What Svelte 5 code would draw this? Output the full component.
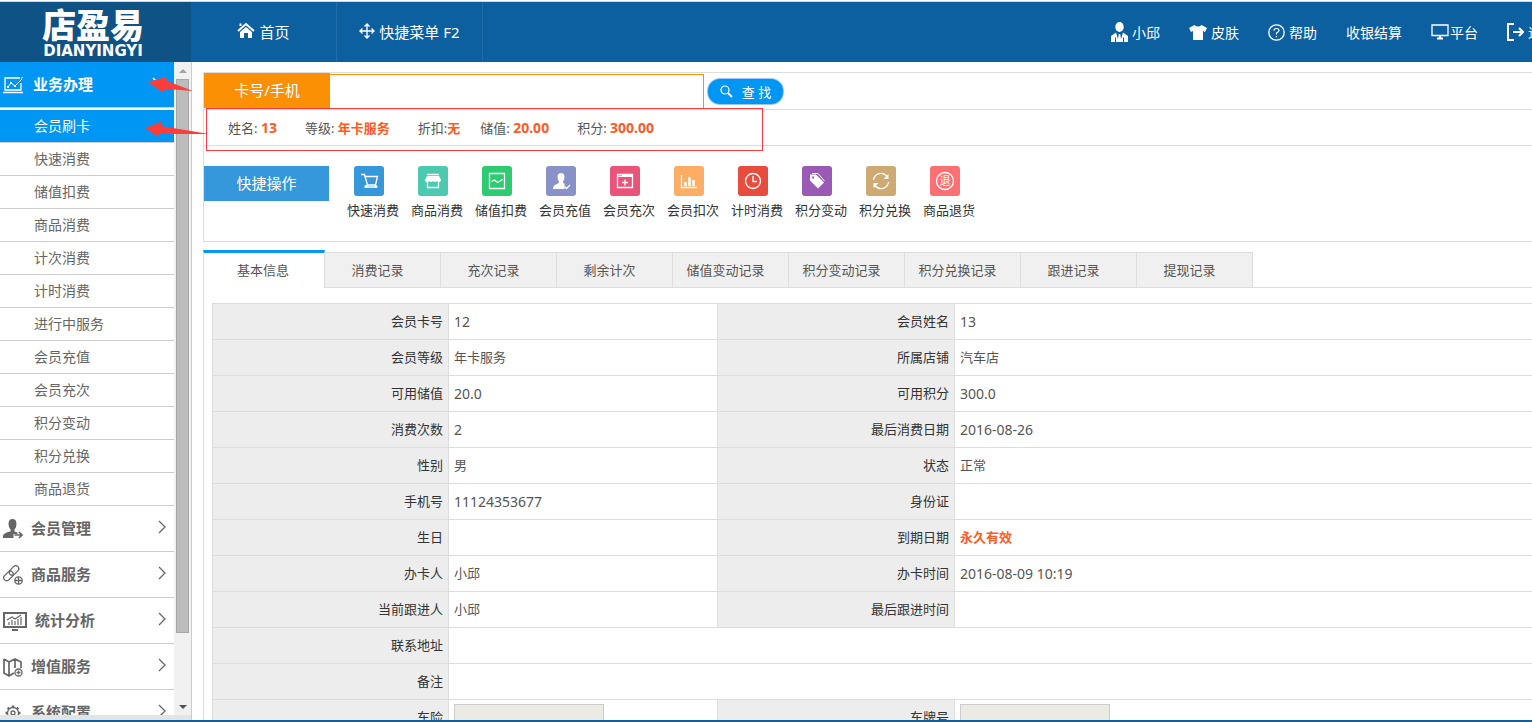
<script>
    const subItems = [
        "会员刷卡", "快速消费", "储值扣费", "商品消费", "计次消费", "计时消费",
        "进行中服务", "会员充值", "会员充次", "积分变动", "积分兑换", "商品退货"
    ];
    const groups = [
        { icon: "member", label: "会员管理" },
        { icon: "link", label: "商品服务" },
        { icon: "chart", label: "统计分析" },
        { icon: "map", label: "增值服务" },
        { icon: "gear", label: "系统配置" }
    ];
    const info = [
        { label: "姓名: ", value: "13", num: true },
        { label: "等级: ", value: "年卡服务" },
        { label: "折扣:", value: "无", tight: true },
        { label: "储值: ", value: "20.00", num: true },
        { label: "积分: ", value: "300.00", num: true }
    ];
    const actions = [
        { icon: "cart", label: "快速消费" },
        { icon: "shop", label: "商品消费" },
        { icon: "wave", label: "储值扣费" },
        { icon: "user", label: "会员充值" },
        { icon: "window", label: "会员充次" },
        { icon: "bars", label: "会员扣次" },
        { icon: "clock", label: "计时消费" },
        { icon: "tags", label: "积分变动" },
        { icon: "cycle", label: "积分兑换" },
        { icon: "refund", label: "商品退货" }
    ];
    const tabs = [
        "基本信息", "消费记录", "充次记录", "剩余计次", "储值变动记录",
        "积分变动记录", "积分兑换记录", "跟进记录", "提现记录"
    ];
    const rows = [
        ["会员卡号", "12", "会员姓名", "13"],
        ["会员等级", "年卡服务", "所属店铺", "汽车店"],
        ["可用储值", "20.0", "可用积分", "300.0"],
        ["消费次数", "2", "最后消费日期", "2016-08-26"],
        ["性别", "男", "状态", "正常"],
        ["手机号", "11124353677", "身份证", ""],
        ["生日", "", "到期日期", "永久有效"],
        ["办卡人", "小邱", "办卡时间", "2016-08-09 10:19"],
        ["当前跟进人", "小邱", "最后跟进时间", ""]
    ];

    let activeSub = $state("会员刷卡");
    let activeTab = $state("基本信息");
    let keyword = $state("");

    const isNum = (text) => /^[\d.:\- ]+$/.test(text);
</script>

<div class="page">
    <header class="topbar">
        <a class="logo" href="#home">
            <strong>店盈易</strong>
            <span>DIANYINGYI</span>
        </a>
        <nav class="main-nav">
            <a href="#home">
                <svg width="18" height="18" viewBox="0 0 18 18" fill="none" stroke="#fff" stroke-width="2">
                    <path d="M1 9 9 2l8 7M3.500 4V1.500" />
                    <path d="M3 10 9 5l6 5v6h-4v-5H7v5H3z" fill="#fff" stroke="none" />
                </svg>
                首页
            </a>
            <a href="#menu">
                <svg width="16" height="16" viewBox="0 0 16 16" fill="none" stroke="#fff" stroke-width="1.400">
                    <path d="M8 1v14M1 8h14M5.500 3.500 8 1l2.500 2.500M5.500 12.500 8 15l2.500-2.500M3.500 5.500 1 8l2.500 2.500M12.500 5.500 15 8l-2.500 2.500" />
                </svg>
                快捷菜单 F2
            </a>
        </nav>
        <nav class="user-nav">
            <a href="#user">
                <svg width="17" height="20" viewBox="0 0 17 20" fill="#fff">
                    <ellipse cx="8.500" cy="5" rx="4.200" ry="5" />
                    <path d="M0 20v-6l5-3.500L7 17l.800-5h1.400l.800 5 2-6.500 5 3.500v6z" />
                    <path d="M4.500 15.500V20M12.500 15.500V20" stroke="#0c60a0" />
                </svg>
                小邱
            </a>
            <a href="#skin">
                <svg width="18" height="16" viewBox="0 0 18 16" fill="#fff">
                    <path d="M5.500 1q3.500 3 7 0L18 4l-2 4-2-1v9H4V7L2 8 0 4z" />
                </svg>
                皮肤
            </a>
            <a href="#help">
                <svg width="17" height="17" viewBox="0 0 17 17" fill="none" stroke="#fff">
                    <circle cx="8.500" cy="8.500" r="7.700" stroke-width="1.300" />
                    <path d="M6 6.500Q6 4.500 8.500 4.500T11 6.500Q11 7.800 8.500 9v1.500M8.500 12v1.200" stroke-width="1.200" />
                </svg>
                帮助
            </a>
            <a href="#cashier">收银结算</a>
            <a href="#platform" class="snug">
                <svg width="18" height="16" viewBox="0 0 18 16" fill="none" stroke="#fff">
                    <path d="M1 1h16v10.500H1z" stroke-width="1.300" />
                    <path d="M9 12v2M6 14.500h6" stroke-width="2" />
                </svg>
                平台
            </a>
            <a href="#logout">
                <svg width="17" height="18" viewBox="0 0 17 18" fill="none" stroke="#fff" stroke-width="2">
                    <path d="M7 1H1v16h6M6 9h10M12 5l4 4-4 4" />
                </svg>
                退出
            </a>
        </nav>
    </header>

    <div class="body">
        <aside class="sidebar">
            <nav class="menu">
                <a class="group open" href="#business">
                    <svg width="22" height="18" viewBox="0 0 22 18" fill="none" stroke="#fff">
                        <path d="M17 2H2v12h16V7M0 16.500h20" stroke-width="1.300" />
                        <path d="m5 11 3-4 4 3 7-7M18 2.500l2-1.500" />
                        <path d="M4 10h2v2H4zM7 6h2v2H7zM11 9h2v2h-2z" fill="#fff" stroke="none" />
                    </svg>
                    <span>业务办理</span>
                    <svg class="chevron" width="14" height="14" viewBox="0 0 14 14" fill="none" stroke="#fff" stroke-width="1.500">
                        <path d="m1 2 6 6 6-6" />
                    </svg>
                </a>
                <ul>
                    {#each subItems as item}
                        <li>
                            <a href="#sub" class:active={item === activeSub} onclick={() => (activeSub = item)}>{item}</a>
                        </li>
                    {/each}
                </ul>
                {#each groups as group}
                    <a class="group" href="#group">
                        <svg width={group.icon === "chart" ? 24 : 20} height="20" viewBox={group.icon === "chart" ? "0 0 24 20" : "0 0 20 20"} fill="none" stroke="#666" stroke-width="1.300">
                            {#if group.icon === "member"}
                                <path d="M5.500 5q0-5 4-5t4 5q0 3.500-2 5.500v2l3 1v1.500h-4V19H0v-2q0-3 7.500-4.500v-2q-2-2-2-5.500z" fill="#666" stroke="none" />
                                <path d="M11.500 16H19M16 13l3 3-3 3" stroke-width="1.600" />
                            {:else if group.icon === "link"}
                                <rect x="5.500" y="2.500" width="11" height="6" rx="3" transform="rotate(-45 11 5.500)" />
                                <rect x="0" y="8" width="11" height="6" rx="3" transform="rotate(-45 5.500 11)" />
                                <circle cx="15.500" cy="15.500" r="3.700" fill="#fff" />
                                <path d="M15.500 12v7M12 15.500h7" />
                            {:else if group.icon === "chart"}
                                <path d="M1 2h22v14H1zM9 19h6" stroke-width="2" />
                                <path d="M6 14v-3M9 14V9M12 14v-4M15 14V8M18 14V6M4 9l5-3 3 2 6-4" stroke-width="1.200" />
                            {:else if group.icon === "map"}
                                <path d="m1 2 5 3 6-3 6 3v6M1 2v14l5 3 5-3M6 5v14M12 2v9" stroke-width="1.700" />
                                <circle cx="15.500" cy="15.500" r="3.500" fill="#fff" />
                                <path d="M15.500 13.500v4M13.500 15.500h4" />
                            {:else}
                                <circle cx="10" cy="10" r="5.500" />
                                <circle cx="10" cy="10" r="2" />
                                <path d="M10 2.500v2M10 15.500v2M2.500 10h2M15.500 10h2M4.700 4.700l1.400 1.400M13.900 13.900l1.400 1.400M4.700 15.300l1.400-1.400M13.900 6.100l1.400-1.400" stroke-width="2.500" />
                            {/if}
                        </svg>
                        <span>{group.label}</span>
                        <svg class="chevron" width="8" height="14" viewBox="0 0 8 14" fill="none" stroke="#666" stroke-width="1.300">
                            <path d="m1 1 6 6-6 6" />
                        </svg>
                    </a>
                {/each}
            </nav>
            <div class="scrollbar">
                <i class="up"></i>
                <div class="thumb"></div>
                <i class="down"></i>
            </div>
            <div class="menu-foot"></div>
        </aside>

        <main>
            <section class="card-panel">
                <form class="search" onsubmit={(e) => e.preventDefault()}>
                    <label for="keyword">卡号/手机</label>
                    <input id="keyword" type="text" bind:value={keyword} />
                    <button type="submit">
                        <svg width="13" height="13" viewBox="0 0 13 13" fill="none" stroke="#fff">
                            <circle cx="5" cy="5" r="4" stroke-width="1.200" />
                            <path d="m8 8 4 4" stroke-width="2" />
                        </svg>
                        <span>查 找</span>
                    </button>
                </form>
                <div class="info">
                    {#each info as item}
                        <span class:tight={item.tight}>{item.label}<b class:num={item.num}>{item.value}</b></span>
                    {/each}
                    <div class="mark"></div>
                </div>
                <div class="quick">
                    <h2>快捷操作</h2>
                    <div class="actions">
                        {#each actions as action}
                            <a href="#action">
                                <svg class={action.icon} width="30" height="30" viewBox="0 0 30 30" fill="none" stroke="#fff" stroke-width="1.300">
                                    {#if action.icon === "cart"}
                                        <path d="M7 8.500h3.500l3 10.500h8L23.500 10.500H11.500M13.500 18.500l-2 2.500H23" />
                                        <circle cx="12" cy="20.500" r="1.500" fill="#fff" stroke="none" />
                                        <circle cx="22" cy="20.500" r="1.500" fill="#fff" stroke="none" />
                                    {:else if action.icon === "shop"}
                                        <path d="M9 8.500h12" />
                                        <path d="M9 10h12l2 4q0 2-2 2t-2-1q-1 1-2 1t-2-1q-1 1-2 1t-2-1q0 1-2 1t-2-2z" fill="#fff" stroke="none" />
                                        <path d="M9.500 16v5.500h11V16" />
                                    {:else if action.icon === "wave"}
                                        <path d="M7.500 7.500h15v15h-15zM9.500 15.500l3-1.500 3 2.500 5-3" />
                                    {:else if action.icon === "user"}
                                        <path d="M15 7q3.500 0 3.500 4 0 3-1.500 4.500 0 2 2 2.500l2 2v3H7q0-4 4-5 2-.5 2-2.500-1.500-1.500-1.500-4.500 0-4 3.500-4z" fill="#fff" stroke="none" />
                                        <circle cx="21" cy="20.500" r="3" fill="#8892c8" stroke="none" />
                                        <path d="m18 20 2.500 2.500L24 19" />
                                    {:else if action.icon === "window"}
                                        <path d="M7.500 8.500h15v13h-15zM15 13.500v6M12 16.500h6" />
                                        <path d="M7 8h16v3H7z" fill="#fff" stroke="none" />
                                        <path d="M8.500 9.500h4" stroke="#ea5479" stroke-dasharray="1 1" />
                                    {:else if action.icon === "bars"}
                                        <path d="M7.500 9v12.500H23" />
                                        <path d="M11.500 20v-4M15.500 20v-9M19.500 20v-6" stroke-width="2.500" />
                                    {:else if action.icon === "clock"}
                                        <circle cx="15" cy="15" r="7.500" />
                                        <path d="M15 10v5.500h4" />
                                    {:else if action.icon === "tags"}
                                        <path fill-rule="evenodd" d="M8 8.500h6l8 8-6 6-8-8zM10 10.500v2h2v-2z" fill="#fff" stroke="none" />
                                        <path d="M10 7.500h6l6.500 7.500" stroke-width="1" />
                                    {:else if action.icon === "cycle"}
                                        <path d="M7.500 14a7.500 7.500 0 0 1 13.500-3.500M22.500 16A7.500 7.500 0 0 1 9 19.500" />
                                        <path d="M22.500 8v5H17.500zM7.500 22v-5H12.500z" fill="#fff" stroke="none" />
                                    {:else}
                                        <circle cx="15" cy="15" r="8.500" />
                                        <text x="15" y="19" text-anchor="middle" font-size="11" fill="#fff" stroke="none">退</text>
                                    {/if}
                                </svg>
                                {action.label}
                            </a>
                        {/each}
                    </div>
                </div>
            </section>

            <section class="detail">
                <div class="tabs" role="tablist">
                    {#each tabs as tab}
                        <button type="button" role="tab" aria-selected={tab === activeTab} class:active={tab === activeTab} onclick={() => (activeTab = tab)}>{tab}</button>
                    {/each}
                </div>
                <table>
                    <colgroup>
                        <col class="c1" />
                        <col class="c2" />
                        <col class="c3" />
                        <col />
                    </colgroup>
                    <tbody>
                        {#each rows as row}
                            <tr>
                                <th scope="row">{row[0]}</th>
                                <td class:num={isNum(row[1])}>{row[1]}</td>
                                <th scope="row">{row[2]}</th>
                                <td class:num={isNum(row[3])} class:hot={row[3] === "永久有效"}>{row[3]}</td>
                            </tr>
                        {/each}
                        <tr>
                            <th scope="row">联系地址</th>
                            <td colspan="3"></td>
                        </tr>
                        <tr>
                            <th scope="row">备注</th>
                            <td colspan="3"></td>
                        </tr>
                        <tr>
                            <th scope="row"><label for="insurance">车险</label></th>
                            <td><input id="insurance" type="text" disabled /></td>
                            <th scope="row"><label for="plate">车牌号</label></th>
                            <td><input id="plate" type="text" disabled /></td>
                        </tr>
                    </tbody>
                </table>
            </section>
        </main>
    </div>

    <!-- pointers over the open menu group and its active entry -->
    <svg class="pointers" width="70" height="70" viewBox="0 0 70 70" fill="#fc3d39">
        <path d="M4 11 22 6l1 4 26 10-27-2-4 3z" />
        <path d="m1 57 16-6v4l48 8-50 0-1 3z" />
    </svg>
</div>

<style>
    :global(body) {
        margin: 0;
        overflow: hidden;
    }
    .page {
        position: relative;
        display: flex;
        flex-direction: column;
        box-sizing: border-box;
        height: 100vh;
        overflow: hidden;
        border-top: 1px solid #fff;
        border-bottom: 2px solid #0c60a0;
        background: #fff;
        color: #555;
        font-family: "Noto Sans", "Noto Sans CJK SC", sans-serif;
        font-size: 13px;
    }
    a {
        color: inherit;
        text-decoration: none;
    }

    .topbar {
        flex: none;
        display: flex;
        height: 60px;
        border-top: 1px solid #d5d5d5;
        background: #0c60a0;
        color: #fff;
        white-space: nowrap;
        overflow: hidden;
    }
    .logo {
        width: 191px;
        box-sizing: border-box;
        padding: 5px 5px 0 0;
        background: #0f5285;
        display: flex;
        flex-direction: column;
        align-items: center;
    }
    .logo strong {
        font-size: 34px;
        line-height: 36px;
        font-weight: 900;
    }
    .logo span {
        font-family: "DejaVu Sans", sans-serif;
        font-size: 15px;
        line-height: 16px;
        font-weight: 700;
    }
    .main-nav {
        display: flex;
        padding-bottom: 0;
        font-size: 15px;
    }
    .main-nav a {
        width: 145px;
        padding-bottom: 2px;
        border-right: 1px solid #1f6ea9;
        display: flex;
        align-items: center;
        justify-content: center;
        gap: 4px;
    }
    .user-nav {
        display: flex;
        align-items: center;
        gap: 29px;
        margin-left: auto;
        margin-right: -24px;
        font-size: 14px;
    }
    .user-nav a {
        display: flex;
        align-items: center;
        gap: 4px;
    }
    .user-nav a.snug {
        gap: 1px;
    }

    .body {
        flex: 1;
        min-height: 0;
        display: flex;
    }
    .sidebar {
        flex: none;
        display: grid;
        grid-template-columns: 174px 17px;
        grid-template-rows: minmax(0, 1fr) 5px;
        border-right: 1px solid #ccc;
    }
    .menu {
        overflow: hidden;
    }
    .menu-foot {
        grid-column: span 2;
        background: #e4e4e4;
    }
    .group {
        display: flex;
        align-items: center;
        gap: 8px;
        box-sizing: border-box;
        height: 46px;
        padding: 0 8px 0 3px;
        border-bottom: 1px solid #ccc;
        color: #666;
        font-size: 15px;
        font-weight: 700;
    }
    .group.open {
        background: #0096f3;
        color: #fff;
    }
    .group span,
    .chevron {
        padding-bottom: 3px;
    }
    .chevron {
        margin-left: auto;
    }
    .menu ul {
        list-style: none;
        margin: 0;
        padding: 2px 0 0;
    }
    .menu li a {
        display: block;
        padding-left: 34px;
        border-bottom: 1px solid #ccc;
        color: #666;
        font-size: 14px;
        line-height: 32px;
    }
    .menu li a.active {
        background: #0096f3;
        color: #fff;
    }
    .scrollbar {
        display: flex;
        flex-direction: column;
        align-items: center;
        padding: 7px 0 6px;
        background: #f1f1f1;
    }
    .scrollbar i {
        border: 4px solid transparent;
    }
    .scrollbar .up {
        border-top: 0;
        border-bottom-color: #a3a3a3;
    }
    .scrollbar .down {
        border-bottom: 0;
        border-top-color: #505050;
    }
    .thumb {
        flex: 1;
        box-sizing: border-box;
        width: 13px;
        margin: 6px 0 72px;
        border: 1px solid #a8a8a8;
        background: #bcbcbc;
    }

    main {
        flex: 1;
        min-width: 0;
        padding: 10px 0 0 11px;
        overflow: hidden;
    }
    .card-panel {
        border: 1px solid #ddd;
        border-right: 0;
    }
    .search {
        display: flex;
        height: 36px;
        border-bottom: 1px solid #ddd;
    }
    .search label {
        width: 126px;
        height: 35px;
        background: #fc9005;
        color: #fff;
        font-size: 15px;
        line-height: 35px;
        text-align: center;
    }
    .search input {
        box-sizing: border-box;
        width: 374px;
        height: 35px;
        margin-top: 1px;
        padding: 0 8px;
        border: 1px solid #fc9005;
        border-left: 0;
        font: inherit;
        outline: 0;
    }
    .search button {
        display: flex;
        align-items: center;
        justify-content: center;
        gap: 9px;
        box-sizing: border-box;
        width: 75px;
        height: 25px;
        margin: 6px 0 0 4px;
        padding: 0;
        border: 0;
        border-radius: 12px;
        box-shadow: 0 0 0 1px #a3c5f7;
        background: #0096f3;
        color: #fff;
        font: inherit;
    }
    .info {
        position: relative;
        display: flex;
        align-items: center;
        height: 35px;
        padding-left: 24px;
        border-bottom: 1px solid #ddd;
        white-space: pre;
    }
    .info span {
        padding-right: 28px;
    }
    .info span.tight {
        padding-right: 20px;
    }
    .info b,
    td.hot {
        color: #ff5a1f;
        font-weight: 700;
    }
    .mark {
        position: absolute;
        top: -2px;
        left: 2px;
        width: 555px;
        height: 41px;
        border: 1px solid #fc3d39;
    }
    .quick {
        display: flex;
        gap: 18px;
        height: 75px;
        padding-top: 20px;
        color: #333;
    }
    h2 {
        flex: none;
        width: 125px;
        height: 35px;
        margin: 0;
        background: #3598db;
        color: #fff;
        font-size: 15px;
        font-weight: 400;
        line-height: 35px;
        text-align: center;
    }
    .actions {
        display: flex;
    }
    .actions a {
        width: 64px;
        line-height: 20px;
        white-space: nowrap;
    }
    .actions svg {
        display: block;
        margin: 0 0 4px 7px;
        border-radius: 3px;
    }
    .cart { background: #3598db; }
    .shop { background: #4bcab0; }
    .wave { background: #2dcc70; }
    .user { background: #8892c8; }
    .window { background: #ea5479; }
    .bars { background: #ffac65; }
    .clock { background: #e84c3d; }
    .tags { background: #9a59b5; }
    .cycle { background: #cfa972; }
    .refund { background: #ff7072; }

    .detail {
        margin-top: 8px;
        border-left: 1px solid #ddd;
    }
    .tabs {
        display: flex;
        align-items: flex-end;
        height: 38px;
        margin-left: -1px;
        background: linear-gradient(#ddd, #ddd) bottom / 100% 1px no-repeat;
    }
    .tabs button {
        box-sizing: border-box;
        width: 116px;
        height: 36px;
        padding: 0 10px 2px 0;
        border: 1px solid #ddd;
        border-left: 0;
        background: #f0f0f0;
        color: #555;
        font: inherit;
    }
    .tabs button.active {
        width: 122px;
        height: 38px;
        padding: 0 2px 2px 0;
        border-top: 3px solid #0096f3;
        border-left: 1px solid #ddd;
        border-bottom: 0;
        background: #fff;
    }
    table {
        width: calc(100% - 8px);
        margin: 15px 0 0 8px;
        border-collapse: collapse;
        table-layout: fixed;
    }
    .c1 { width: 236px; }
    .c2 { width: 269px; }
    .c3 { width: 237px; }
    th,
    td {
        box-sizing: border-box;
        height: 36px;
        padding: 0 5px 2px;
        border: 1px solid #ddd;
        line-height: 20px;
        text-align: left;
    }
    td:last-child {
        border-right: 0;
    }
    th {
        background: #ededed;
        color: #333;
        font-weight: 400;
        text-align: right;
    }
    td.num {
        padding-bottom: 0;
    }
    .num {
        font-size: 14px;
    }
    td input {
        display: block;
        box-sizing: border-box;
        width: 150px;
        height: 25px;
        border: 1px solid #ccc;
        background: #ebebe4;
    }
    .pointers {
        position: absolute;
        top: 70px;
        left: 144px;
        pointer-events: none;
    }
</style>
